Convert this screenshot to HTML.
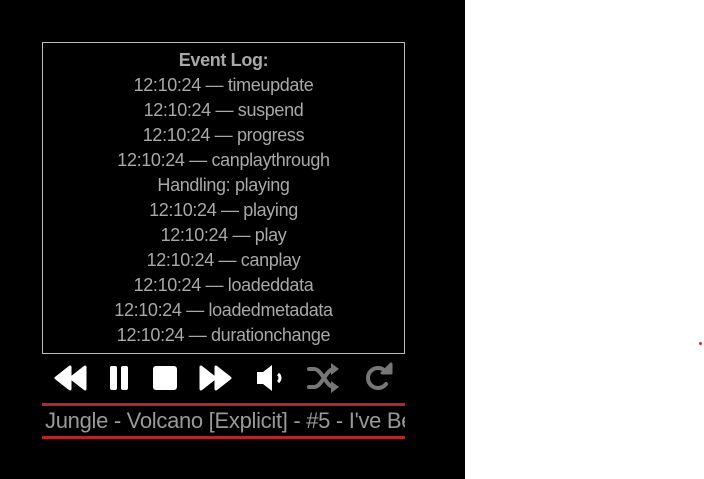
<!DOCTYPE html>
<html><head><style>
body{margin:0;width:704px;height:479px;background:#fff;position:relative;overflow:hidden;font-family:"Liberation Sans Narrow","Liberation Sans",sans-serif;}
#bg{position:absolute;left:0;top:0;width:465px;height:479px;background:#000;}
#log{position:absolute;left:42px;top:42px;width:361px;height:310px;border:1px solid #bbb;overflow:hidden;text-align:center;color:#a8a8a8;font-size:18px;line-height:25px;letter-spacing:-0.35px;}
#log .in{padding-top:5px;}
#log b{font-weight:bold;}
.red{position:absolute;left:42px;width:363px;height:3px;background:#b3272a;}
#mq{position:absolute;left:45px;top:407px;width:360px;overflow:hidden;white-space:nowrap;color:#999;font-size:22px;line-height:28px;letter-spacing:-0.3px;}
svg{position:absolute;}
</style></head><body>
<div id="bg"></div>
<div id="log"><div class="in">
<b>Event Log:</b><br>12:10:24 — timeupdate<br>12:10:24 — suspend<br>12:10:24 — progress<br>12:10:24 — canplaythrough<br>Handling: playing<br>12:10:24 — playing<br>12:10:24 — play<br>12:10:24 — canplay<br>12:10:24 — loadeddata<br>12:10:24 — loadedmetadata<br>12:10:24 — durationchange
</div></div>
<svg width="465" height="400" style="left:0;top:0">
<g fill="#fff" stroke="#fff" stroke-linejoin="round" stroke-width="3">
<path d="M70 367 L56 378 L70 389 Z M85 367 L71 378 L85 389 Z"/>
<path d="M201 367 L215 378 L201 389 Z M216 367 L230 378 L216 389 Z"/>
</g>
<rect x="110" y="366" width="7" height="24" rx="2" fill="#fff"/>
<rect x="121" y="366" width="7" height="24" rx="2" fill="#fff"/>
<rect x="153" y="366" width="24" height="24" rx="3" fill="#fff"/>
<path d="M257 372 H263 L272 365 V391 L263 384 H257 Z" fill="#fff"/>
<path d="M278 374 A5 5 0 0 1 278 382" stroke="#fff" stroke-width="3" fill="none"/>
<g stroke="#777" stroke-width="4" fill="none" stroke-linecap="round">
<path d="M309 369 H314 C322 369 326 387 334 387"/>
<path d="M309 387 H314 C322 387 326 369 334 369"/>
<path d="M386 372 A10 10 0 1 0 386 384"/>
</g>
<path d="M331 363 L339 369 L331 375 Z M331 381 L339 387 L331 393 Z" fill="#777"/>
<path d="M382 373 L391 373 L391 364 Z" fill="#777" stroke="#777" stroke-width="3" stroke-linejoin="round"/>
</svg>
<div class="red" style="top:403px"></div>
<div class="red" style="top:436px"></div>
<div id="mq">Jungle - Volcano [Explicit] - #5 - I've Been In Love</div>
<div style="position:absolute;left:699px;top:342px;width:3px;height:3px;background:#d22;border-radius:50%"></div>
</body></html>
